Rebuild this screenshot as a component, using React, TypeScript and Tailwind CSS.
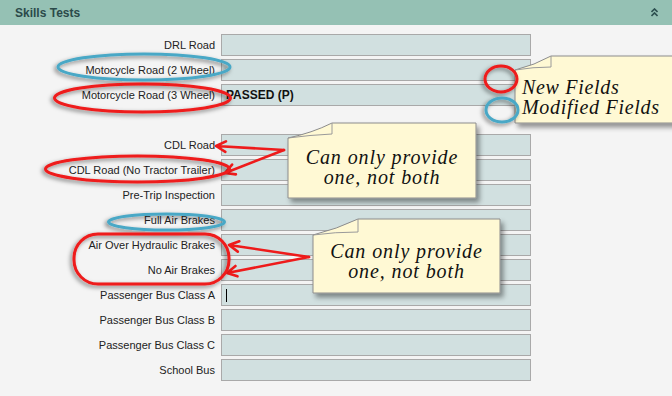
import React from 'react'

const rows: (string | null)[] = [
  'DRL Road',
  'Motocycle Road (2 Wheel)',
  'Motorcycle Road (3 Wheel)',
  null,
  'CDL Road',
  'CDL Road (No Tractor Trailer)',
  'Pre-Trip Inspection',
  'Full Air Brakes',
  'Air Over Hydraulic Brakes',
  'No Air Brakes',
  'Passenger Bus Class A',
  'Passenger Bus Class B',
  'Passenger Bus Class C',
  'School Bus',
]

// open V arrowhead pointing at (x2, y2)
function arrow(x1: number, y1: number, x2: number, y2: number) {
  const a = Math.atan2(y2 - y1, x2 - x1)
  const len = 11
  const spread = 0.5
  const p1x = x2 - len * Math.cos(a - spread)
  const p1y = y2 - len * Math.sin(a - spread)
  const p2x = x2 - len * Math.cos(a + spread)
  const p2y = y2 - len * Math.sin(a + spread)
  return `M${x1},${y1} L${x2},${y2} M${p1x},${p1y} L${x2},${y2} L${p2x},${p2y}`
}

function Row({ label }: { label: string }) {
  return (
    <div className="flex items-center gap-[6px] h-[22px]">
      <div className="w-[215px] text-right text-[11px] text-[#222] whitespace-nowrap">{label}</div>
      <div className="relative w-[310px] h-[22px] border border-[#a9a9a9] bg-[#d1e0e0] flex items-center pl-[4px]">
        {label === 'Motorcycle Road (3 Wheel)' && (
          <span className="font-bold text-[12px] text-[#111]">PASSED (P)</span>
        )}
        {label === 'Passenger Bus Class A' && <span className="w-px h-[13px] bg-black" />}
      </div>
    </div>
  )
}

export default function App() {
  const script = { fontFamily: '"Liberation Serif", serif' }
  return (
    <div
      className="relative w-[672px] h-[396px] overflow-hidden bg-[#f4f4f4]"
      style={{ fontFamily: '"Liberation Sans", Arial, sans-serif' }}
    >
      {/* header */}
      <div className="h-[25px] bg-[#95c1b4] flex items-center justify-between pl-[15px] pr-[14px]">
        <span className="font-bold text-[12px] text-[#2b4a4a]">Skills Tests</span>
        <svg width="7" height="9" viewBox="0 0 7 9">
          <path d="M0.5,4 L3.5,1 L6.5,4 M0.5,8 L3.5,5 L6.5,8" fill="none" stroke="#2d5050" strokeWidth="1.6" />
        </svg>
      </div>

      {/* form */}
      <div className="flex flex-col gap-[3px] pt-[9px]">
        {rows.map((r, i) => (r ? <Row key={i} label={r} /> : <div key={i} className="h-[22px]" />))}
      </div>

      {/* annotations */}
      <svg className="absolute inset-0 pointer-events-none" width="672" height="396">
        <defs>
          <filter id="ring" x="-20%" y="-50%" width="140%" height="200%">
            <feDropShadow dx="-2" dy="2" stdDeviation="2" floodColor="#000" floodOpacity="0.5" />
          </filter>
          <filter id="note" x="-10%" y="-10%" width="130%" height="140%">
            <feDropShadow dx="3" dy="4" stdDeviation="2.5" floodColor="#000" floodOpacity="0.4" />
          </filter>
        </defs>

        <g fill="none" stroke="#ee1b1b" strokeWidth="2.6" strokeLinecap="round" strokeLinejoin="round">
          <path d={arrow(284, 150, 216, 146)} />
          <path d={arrow(284, 150, 225, 173)} />
          <path d={arrow(309, 257, 229, 245)} />
          <path d={arrow(309, 257, 227, 273)} />
        </g>

        <g filter="url(#note)">
          <path d="M288,138 Q312,133 332,123 L476,123 L476,198 L288,198 Z" fill="#fff9d4" stroke="#8c8c8c" />
          <path d="M313,235 Q337,229 358,219 L500,219 L500,293 L313,293 Z" fill="#fff9d4" stroke="#8c8c8c" />
          <path d="M515,70 Q535,65 551,56 L680,56 L680,123 L515,123 Z" fill="#fff9d4" stroke="#8c8c8c" />
        </g>
        <g fill="none" stroke="#9a9a9a" strokeWidth="1">
          <path d="M332,123 L332,134 Q310,135 288,138" />
          <path d="M358,219 L358,232 Q335,232 313,235" />
          <path d="M551,56 L551,67 Q533,67 515,70" />
        </g>

        <g fill="none" strokeWidth="3" filter="url(#ring)">
          <ellipse cx="144" cy="67" rx="86" ry="13" stroke="#4aa8c6" />
          <ellipse cx="142.5" cy="98" rx="88" ry="14" stroke="#ee1b1b" />
          <ellipse cx="137.5" cy="169" rx="92" ry="13" stroke="#ee1b1b" />
          <ellipse cx="166.5" cy="222" rx="58" ry="8" stroke="#4aa8c6" />
          <rect x="74" y="234" width="155" height="50" rx="24" stroke="#ee1b1b" />
          <ellipse cx="501" cy="79" rx="16" ry="13" stroke="#ee1b1b" />
          <ellipse cx="502" cy="110" rx="16" ry="12" stroke="#4aa8c6" />
        </g>
      </svg>

      {/* note texts */}
      <div
        className="absolute left-[288px] top-[147px] w-[188px] flex flex-col items-center italic text-[20px] leading-[20px] tracking-[0.9px] text-[#111]"
        style={script}
      >
        <span>Can only provide</span>
        <span>one, not both</span>
      </div>
      <div
        className="absolute left-[313px] top-[241px] w-[187px] flex flex-col items-center italic text-[20px] leading-[20px] tracking-[0.9px] text-[#111]"
        style={script}
      >
        <span>Can only provide</span>
        <span>one, not both</span>
      </div>
      <div
        className="absolute left-[522px] top-[77px] flex flex-col italic text-[20px] leading-[20px] tracking-[0.7px] text-[#111] whitespace-nowrap"
        style={script}
      >
        <span>New Fields</span>
        <span>Modified Fields</span>
      </div>
    </div>
  )
}
